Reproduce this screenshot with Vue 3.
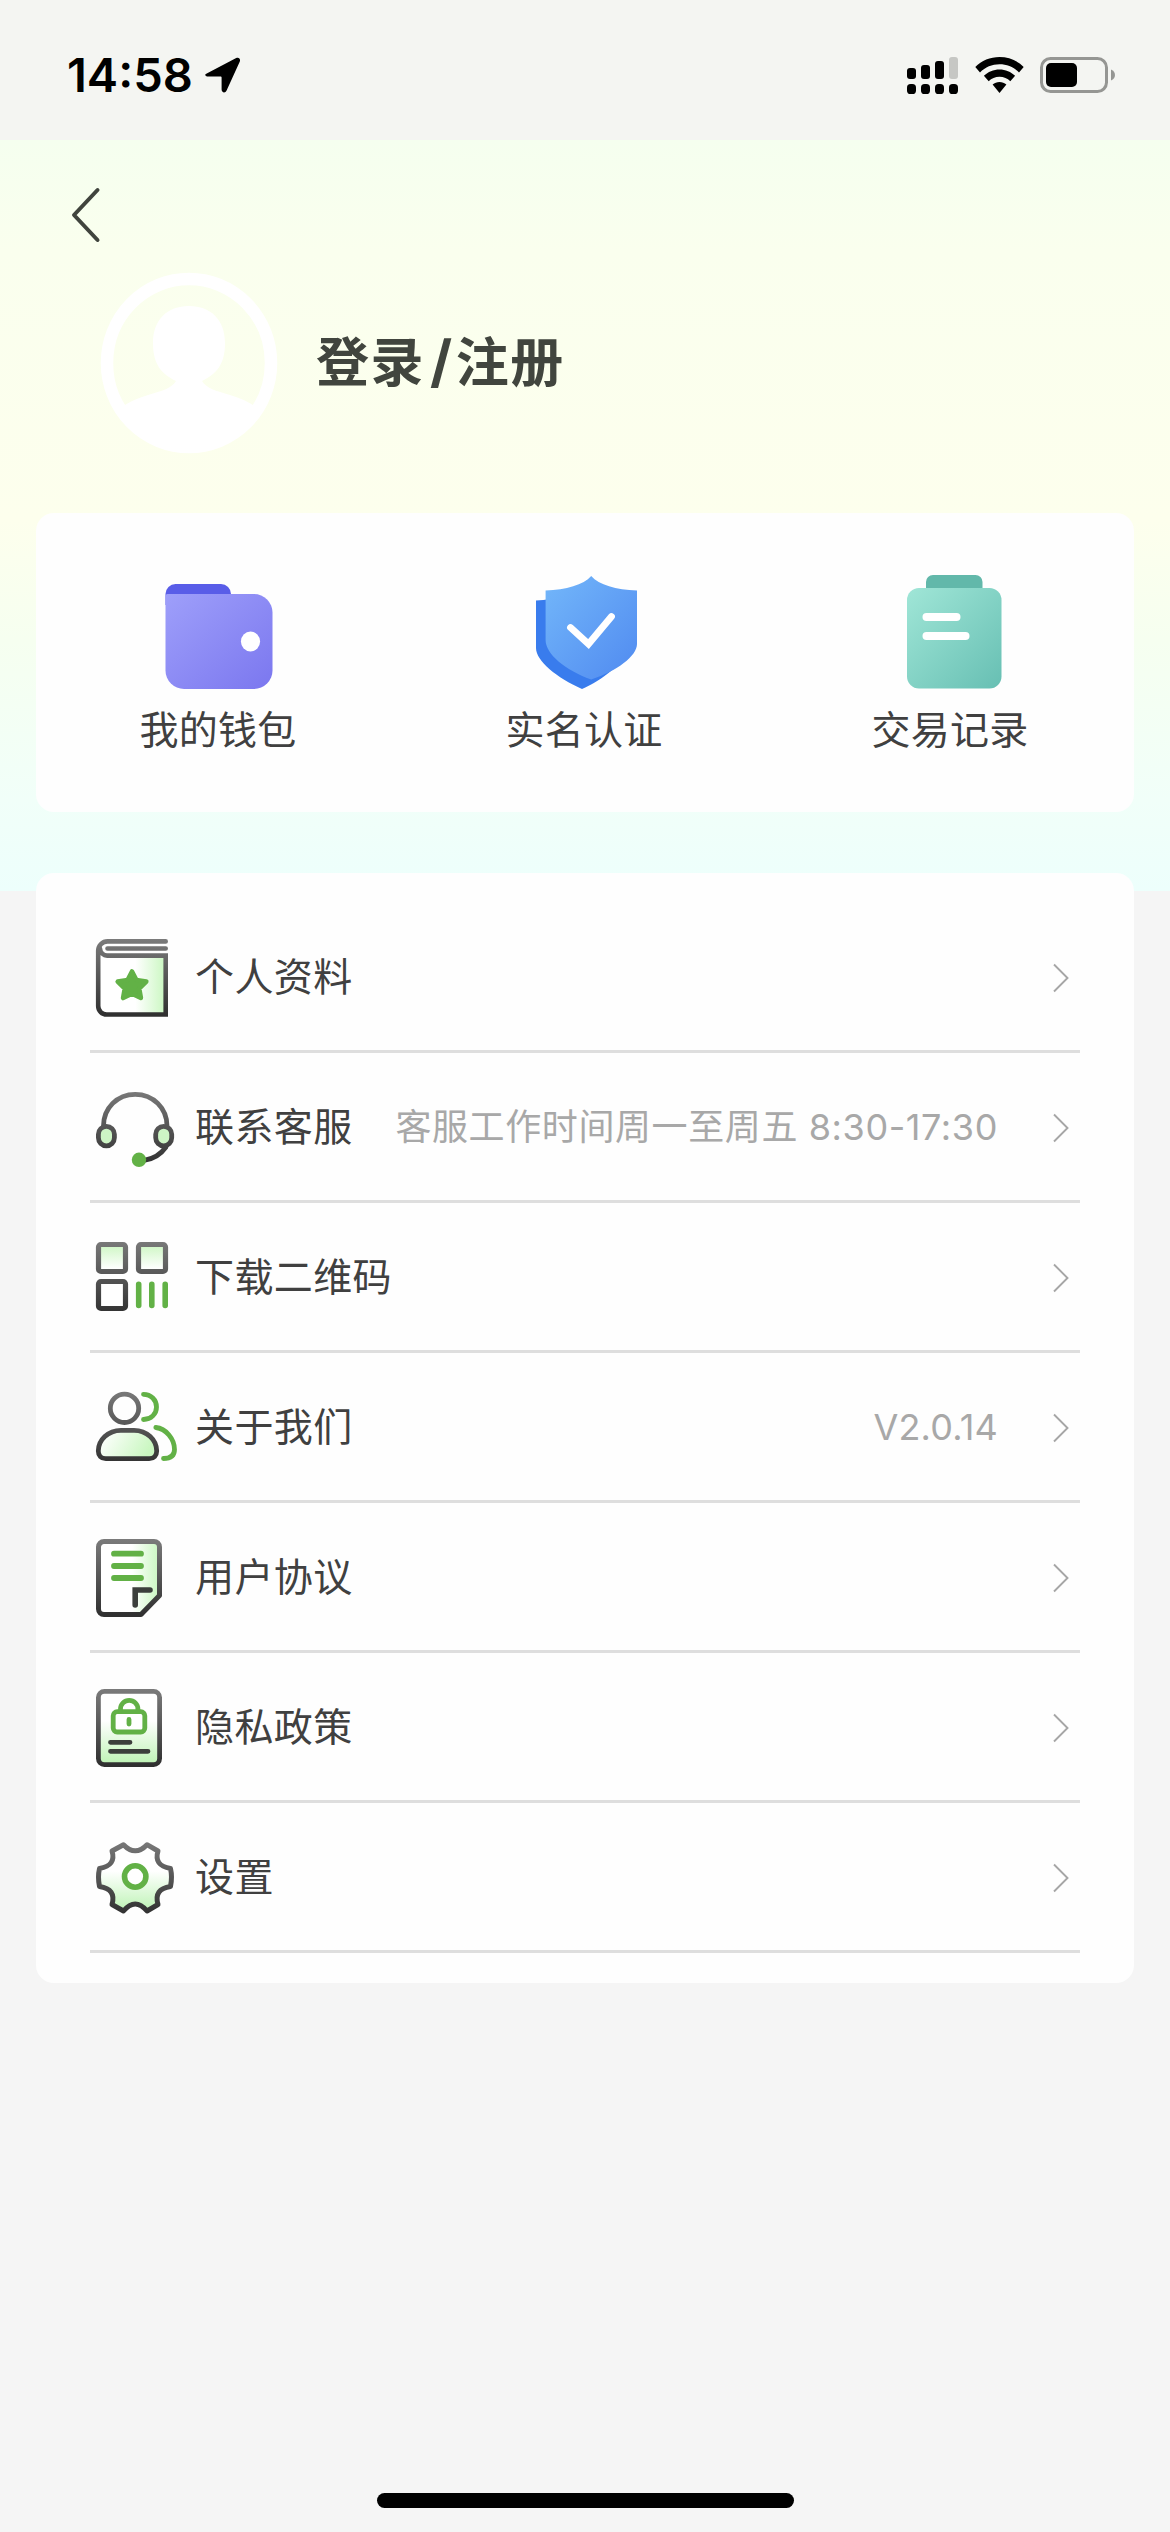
<script setup>
const rows = [
  { id: 'profile', label: '个人资料', note: '' },
  { id: 'service', label: '联系客服', note: '客服工作时间周一至周五 8:30-17:30' },
  { id: 'qrcode', label: '下载二维码', note: '' },
  { id: 'about', label: '关于我们', note: 'V2.0.14' },
  { id: 'terms', label: '用户协议', note: '' },
  { id: 'privacy', label: '隐私政策', note: '' },
  { id: 'settings', label: '设置', note: '' },
]
</script>

<template>
  <div class="screen">
    <header class="status">
      <div class="status-left">
        <span class="time">14:58</span>
        <svg class="location" width="36" height="36" viewBox="0 0 36 36">
          <path d="M2.2 16.2 31.2 1.1c2.6-1.3 4.7.8 3.5 3.6L21.6 33.6c-1.3 2.9-5 2.2-5-1V20.6c0-.7-.4-1.1-1.1-1.1H3.3c-3.4 0-4.2-2.1-1.1-3.3z" />
        </svg>
      </div>
      <div class="status-right">
        <svg width="51" height="38" viewBox="0 0 51 38">
          <rect x="0" y="12" width="9" height="11" rx="3" />
          <rect x="14" y="9" width="9" height="14" rx="3" />
          <rect x="28" y="5" width="9" height="18" rx="3" />
          <rect x="42" y="1" width="9" height="22" rx="3" fill="#c6c7c4" />
          <rect v-for="n in 4" :key="n" :x="(n - 1) * 14" y="28" width="9" height="10" rx="3.6" />
        </svg>
        <svg class="wifi" width="49" height="38" viewBox="0 0 49 38">
          <path d="M24.5 1C15.300 1 6.500 4.600.3 10.900L5 16.400C10.200 11.200 17.100 8.300 24.500 8.300S38.800 11.200 44 16.400L48.700 10.900C42.500 4.600 33.700 1 24.500 1z" />
          <path d="M24.500 13.500C18.500 13.500 13 15.800 8.900 19.800L13.700 25.300C16.500 22.400 20.300 20.800 24.500 20.800S32.500 22.400 35.300 25.300L40.100 19.800C36 15.800 30.500 13.500 24.500 13.500z" />
          <path d="M24.500 26c-2.600 0-5 .9-6.900 2.500L24.500 37l6.900-8.500C29.500 26.900 27.100 26 24.500 26z" />
        </svg>
        <svg class="battery" width="76" height="38" viewBox="0 0 76 38">
          <rect x="1.500" y="2.500" width="65" height="33" rx="9" fill="none" stroke="#959693" stroke-width="3" />
          <rect x="6" y="7" width="31" height="24" rx="5" />
          <path d="M71 13.500c5.300 1.700 5.300 9.300 0 11z" fill="#959693" />
        </svg>
      </div>
    </header>

    <main class="main">
      <svg class="back" width="33" height="60" viewBox="0 0 33 60">
        <path d="M28.500 5 5 30 28.500 55" fill="none" stroke="#40443d" stroke-width="4" stroke-linecap="round" stroke-linejoin="round" />
      </svg>

      <div class="user">
        <svg class="avatar" width="180" height="184" viewBox="0 0 180 184">
          <defs>
            <clipPath id="face"><ellipse cx="90" cy="92" rx="84" ry="87" /></clipPath>
          </defs>
          <ellipse cx="90" cy="92" rx="82" ry="84" fill="none" stroke="#fff" stroke-width="12.500" />
          <g clip-path="url(#face)" fill="#fff">
            <path d="M90 35c-22 0-36 14-36 37 0 22 9 31 23 38-4 7-14 10-28 14-16 5-28 11-36 22v40h154v-40c-8-11-20-17-36-22-14-4-24-7-28-14 14-7 23-16 23-38 0-23-14-37-36-37z" />
          </g>
        </svg>
        <h1 class="login">登录<span class="slash">/</span>注册</h1>
      </div>

      <section class="card shortcuts">
        <div class="shortcut">
          <svg width="120" height="120" viewBox="0 0 120 120">
            <defs>
              <linearGradient id="wallet" x1="0" y1="0" x2="1" y2="1">
                <stop offset="0" stop-color="#9e9ffa" />
                <stop offset="1" stop-color="#7b77ef" />
              </linearGradient>
            </defs>
            <path d="M6.500 32V21a10 10 0 0 1 10-10H62a10 10 0 0 1 10 10v11z" fill="#595de8" />
            <path d="M8.500 21H95a18.500 18.500 0 0 1 18.500 18.500V97.500A18.500 18.500 0 0 1 95 116H25A18.500 18.500 0 0 1 6.500 97.500V23a2 2 0 0 1 2-2z" fill="url(#wallet)" />
            <ellipse cx="91.500" cy="68.500" rx="9.600" ry="10" fill="#fff" />
          </svg>
          <span class="caption">我的钱包</span>
        </div>
        <div class="shortcut">
          <svg width="120" height="120" viewBox="0 0 120 120">
            <defs>
              <linearGradient id="shield" x1="0" y1="0" x2="1" y2="1">
                <stop offset="0" stop-color="#73b7fa" />
                <stop offset="1" stop-color="#508af0" />
              </linearGradient>
            </defs>
            <path d="M11 27.500C31 26.500 48 22 57 13L104 75C97 91 78 107 57 116 32 105 11 88 11 75z" fill="#397ced" />
            <path d="M66.200 3C74 12 91 16.800 112 17.500V71c0 12-20 27-45.800 35.500C40 97 20.600 81 20.600 67V17.500C41 16.800 58.500 12 66.200 3z" fill="url(#shield)" />
            <path d="M45.500 54.500 63.500 71 86.500 43.500" fill="none" stroke="#fff" stroke-width="6.800" stroke-linecap="round" />
          </svg>
          <span class="caption">实名认证</span>
        </div>
        <div class="shortcut">
          <svg width="120" height="120" viewBox="0 0 120 120">
            <defs>
              <linearGradient id="record" x1="0" y1="0" x2="1" y2="1">
                <stop offset="0" stop-color="#a0e6d7" />
                <stop offset="1" stop-color="#67bfb3" />
              </linearGradient>
            </defs>
            <path d="M35 18V9a7 7 0 0 1 7-7H84.500a7 7 0 0 1 7 7v9z" fill="#62b8aa" />
            <rect x="16" y="15" width="94.500" height="100.500" rx="12" fill="url(#record)" />
            <rect x="31.500" y="40" width="38" height="8" rx="4" fill="#fff" />
            <rect x="31.500" y="59" width="47" height="8" rx="4" fill="#fff" />
          </svg>
          <span class="caption">交易记录</span>
        </div>
      </section>

      <section class="card list">
        <svg class="defs" width="0" height="0">
          <defs>
            <linearGradient id="ink" gradientUnits="userSpaceOnUse" x1="0" y1="10" x2="0" y2="85">
              <stop offset="0" stop-color="#7a7a7a" />
              <stop offset="1" stop-color="#303030" />
            </linearGradient>
            <linearGradient id="mintRight" x1="0" y1="0" x2="1" y2="0">
              <stop offset="0.550" stop-color="#fff" />
              <stop offset="1" stop-color="#c9f7c0" />
            </linearGradient>
            <linearGradient id="mintBody" x1="0" y1="0" x2="1" y2="0.300">
              <stop offset="0.100" stop-color="#fff" />
              <stop offset="1" stop-color="#c9f7c0" />
            </linearGradient>
            <linearGradient id="mintTop" x1="0" y1="0" x2="0" y2="1">
              <stop offset="0" stop-color="#cdf6c3" />
              <stop offset="0.900" stop-color="#fff" />
            </linearGradient>
            <linearGradient id="mintBottom" x1="0" y1="0" x2="0" y2="1">
              <stop offset="0.400" stop-color="#fff" />
              <stop offset="1" stop-color="#bdf3b4" />
            </linearGradient>
          </defs>
        </svg>
        <div v-for="row in rows" :key="row.id" class="row">
          <svg class="icon" width="90" height="93" viewBox="0 0 90 93">
            <g v-if="row.id === 'profile'" stroke-width="4.600">
              <path d="M8.200 21V76.500a8 8 0 0 0 8 8H75.800V25.500H17" fill="url(#mintRight)" stroke="none" />
              <path d="M75.700 11.400H17.500a9.300 9.300 0 0 0-9.300 9.200V76a8.500 8.500 0 0 0 8.500 8.500H75.700V25.600H17.500a7.200 7.200 0 0 1-7.500-7M17.500 18.500H75.700" class="ink" />
              <path d="M42 41.500 46.300 49.900 56.300 51.500 49.200 58.500 50.900 68 42 63.600 33.100 68 34.800 58.500 27.700 51.500 37.700 49.900z" class="green solid" />
            </g>
            <g v-else-if="row.id === 'service'" stroke-width="4.800">
              <path d="M13.500 46C13.500 28 27.300 14.300 45.200 14.300S77 28 77 46" class="ink" />
              <rect x="8.400" y="46.300" width="16" height="19.500" rx="8" fill="#cdf5c5" class="outline" />
              <rect x="65.700" y="46.300" width="16" height="19.500" rx="8" fill="#cdf5c5" class="outline" />
              <path d="M76 67C71 74 64 79 54 80.300" class="ink" />
              <circle cx="49" cy="79.800" r="7.200" fill="#62b146" />
            </g>
            <g v-else-if="row.id === 'qrcode'" stroke-width="5.200">
              <rect x="8.500" y="14.500" width="27" height="27" rx="2.500" fill="url(#mintTop)" class="outline" />
              <rect x="48.500" y="14.500" width="27" height="27" rx="2.500" fill="url(#mintTop)" class="outline" />
              <rect x="8.500" y="51.500" width="27" height="27" rx="2.500" fill="#fff" class="outline" />
              <path d="M48.700 54.400V75.500M61.800 54.400V75.500M75.200 54.400V75.500" class="green" stroke-width="5.600" />
            </g>
            <g v-else-if="row.id === 'about'" stroke-width="4.800">
              <circle cx="34.500" cy="28.300" r="14.200" class="ink" />
              <path d="M8.300 71C8.300 60 18 50.300 31 50.300H44C57 50.300 66.700 60 66.700 71c0 4.500-3 7.700-7.500 7.700H15.800c-4.500 0-7.500-3.200-7.500-7.700z" fill="url(#mintBody)" class="outline" />
              <path d="M53.500 14.300C61 14.300 66.500 20 66.500 27S61 39.500 53.500 39.500M65.800 47.500C76 48.500 84.500 59 84.500 69.500c0 6-3.500 9-11 9" class="green" />
            </g>
            <g v-else-if="row.id === 'terms'" stroke-width="5">
              <path d="M14 11.500H64a5.500 5.500 0 0 1 5.500 5.500V65.500L51 84.500H14A5.500 5.500 0 0 1 8.500 79V17a5.500 5.500 0 0 1 5.500-5.500z" fill="url(#mintRight)" class="outline" />
              <path d="M24 23.700H51M24 36H51M24 48H51" class="green" stroke-width="5.800" />
              <path d="M60 60H45.200V75" class="ink dark" stroke-width="5.600" />
            </g>
            <g v-else-if="row.id === 'privacy'" stroke-width="4.800">
              <rect x="8.400" y="11.400" width="61.200" height="73.200" rx="6" fill="url(#mintBottom)" class="outline" />
              <rect x="23.200" y="31.700" width="31.600" height="20.300" rx="4" fill="#fff" stroke="#62b146" />
              <path d="M30.500 31V29a8.700 8.700 0 0 1 17.400 0v2M39 39.500V44" class="green" />
              <path d="M20.500 62.300H40M20.500 71.300H58" class="ink dark" />
            </g>
            <g v-else stroke-width="5">
              <path d="M33.500 14.700Q45.200 27 57 14.700L68 21Q63.500 35.500 80.500 38.500Q82.500 47 80.500 56.500Q63.500 59 68 74.500L57 81Q45.200 67 33.500 81L22 74.500Q26.500 59 9.500 56.500Q7.500 47 9.500 38.500Q26.500 35.500 22 21z" fill="url(#mintBottom)" class="outline" />
              <circle cx="45.200" cy="46.500" r="10.700" fill="#fff" stroke="#62b146" stroke-width="5.600" />
            </g>
          </svg>
          <span class="label">{{ row.label }}</span>
          <span class="note" :class="{ version: row.id === 'about' }">{{ row.note }}</span>
          <svg class="chevron" width="18" height="30" viewBox="0 0 18 30">
            <path d="M2 1.500 15.500 15 2 28.500" fill="none" stroke="#a6a6a6" stroke-width="1.900" />
          </svg>
        </div>
      </section>
    </main>

    <div class="home"></div>
  </div>
</template>

<style>
body {
  margin: 0;
  background: #f5f5f5;
}
</style>

<style scoped>
.screen {
  display: flex;
  flex-direction: column;
  box-sizing: border-box;
  width: 1170px;
  height: 2532px;
  background: #f5f5f5;
  color: #404040;
  font-family: Inter, "Noto Sans CJK SC", sans-serif;
}
.status {
  display: flex;
  justify-content: space-between;
  box-sizing: border-box;
  height: 140px;
  padding: 0 54px 0 67px;
  background: #f4f5f2;
  color: #000;
}
.status-left,
.status-right {
  display: flex;
  align-items: center;
  height: 150px;
}
.time {
  font-size: 47px;
  font-weight: 600;
  line-height: 56px;
  letter-spacing: 0;
}
.location {
  margin-left: 12px;
}
.wifi {
  margin-left: 17px;
}
.battery {
  margin-left: 16px;
}
.main {
  flex: 1;
  padding: 0 36px;
  background: linear-gradient(180deg, #f5ffef 0, #faffee 110px, #fdffed 380px, #f6fff0 500px, #f1fff9 660px, #edfffc 751px) no-repeat 0 0 / 100% 751px;
}
.back {
  display: block;
  margin: 45px 0 0 33px;
}
.user {
  display: flex;
  align-items: center;
  height: 184px;
  margin: 26px 0 58px 63px;
}
.login {
  margin: 0 0 0 37px;
  font-size: 53px;
  font-weight: 600;
  line-height: 80px;
  letter-spacing: 1.5px;
  color: #41453e;
}
.slash {
  margin: 0 2px 0 5px;
  font-size: 57px;
  font-weight: 700;
  line-height: 1;
}
.card {
  border-radius: 18px;
  background: #fefefe;
}
.shortcuts {
  display: flex;
  box-sizing: border-box;
  height: 299px;
  padding-top: 60px;
}
.shortcut {
  display: flex;
  flex: 1;
  flex-direction: column;
  align-items: center;
}
.caption {
  margin-top: 8px;
  padding-right: 2px;
  font-size: 39px;
  line-height: 58px;
  letter-spacing: 0.3px;
}
.list {
  margin-top: 61px;
  padding: 30px 54px;
}
.defs {
  position: absolute;
}
.row {
  display: flex;
  align-items: center;
  box-sizing: border-box;
  height: 150px;
  border-bottom: 3px solid #dedede;
}
.label {
  margin-left: 15px;
  padding-top: 1px;
  font-size: 39px;
  line-height: 58px;
  letter-spacing: 0.4px;
}
.note {
  flex: 1;
  text-align: right;
  font-size: 36px;
  line-height: 54px;
  letter-spacing: 0.6px;
  color: #a8a8a8;
}
.version {
  letter-spacing: 0.2px;
}
.chevron {
  margin: 3px 10px 0 54px;
}
.icon {
  flex: none;
}
.ink {
  fill: none;
  stroke: url(#ink);
  stroke-linecap: round;
}
.dark {
  stroke: #3c3f3c;
}
.outline {
  stroke: url(#ink);
  stroke-linejoin: round;
}
.green {
  fill: none;
  stroke: #62b146;
  stroke-linecap: round;
  stroke-linejoin: round;
}
.solid {
  fill: #62b146;
}
.home {
  align-self: center;
  width: 417px;
  height: 15px;
  margin: 0 0 24px 1px;
  border-radius: 8px;
  background: #000;
}
</style>
